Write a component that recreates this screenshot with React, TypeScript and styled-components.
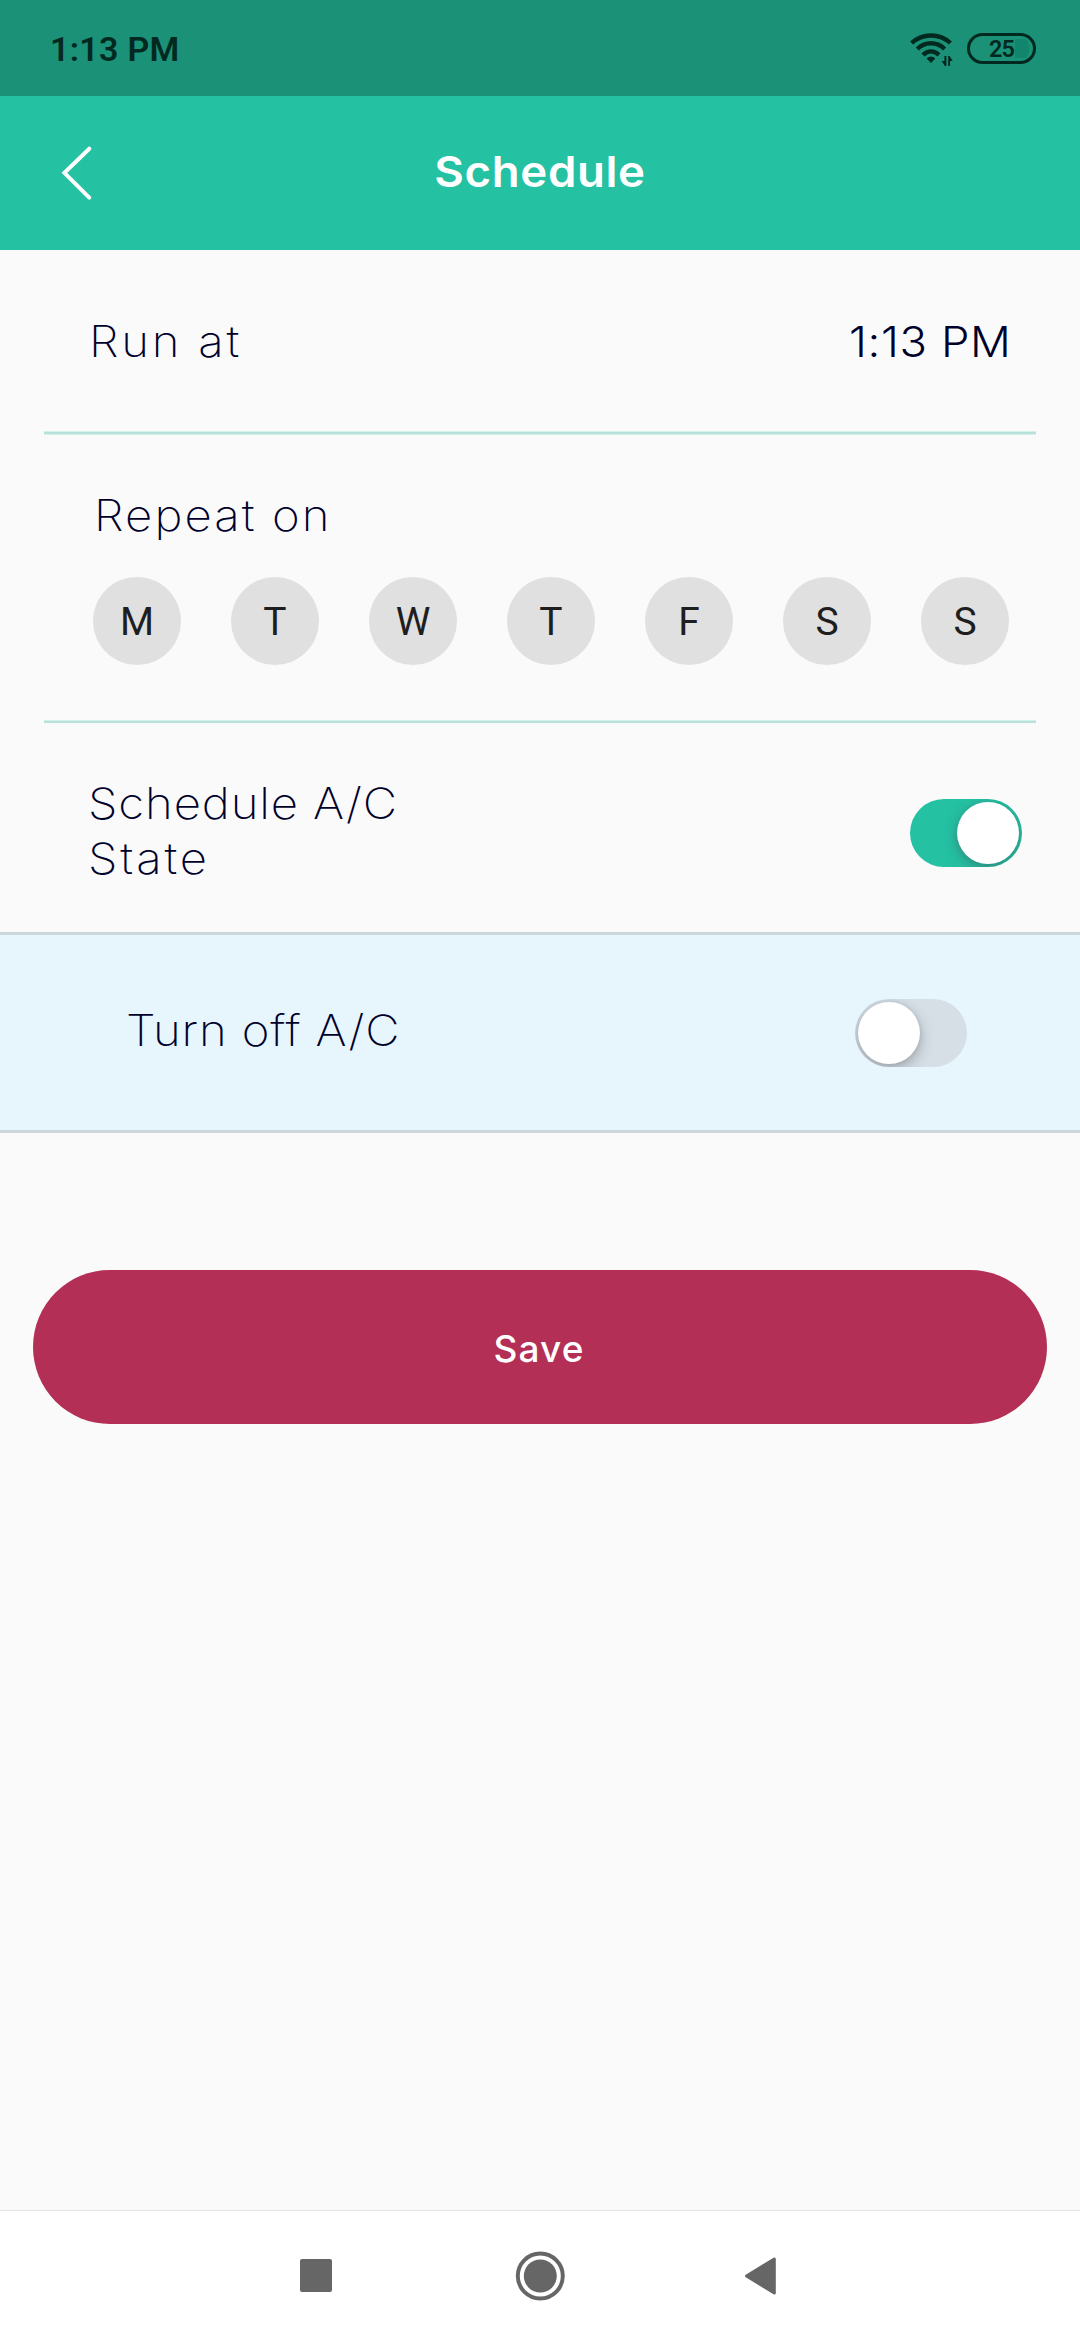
import React, { useState } from 'react';
import styled, { createGlobalStyle } from 'styled-components';

const GlobalStyle = createGlobalStyle`
  *, *::before, *::after { box-sizing: border-box; }
  body { margin: 0; background: #fafafb; font-family: Inter, "Liberation Sans", sans-serif; }
  button { border: 0; padding: 0; background: none; font: inherit; color: inherit; }
`;

const Screen = styled.div`
  display: flex;
  flex-direction: column;
  width: 1080px;
  height: 2340px;
  overflow: hidden;
  background: #fafafb;
  color: #00002a;
`;

const StatusBar = styled.div`
  display: flex;
  align-items: center;
  justify-content: space-between;
  flex: none;
  height: 96px;
  padding: 0 44px 0 50px;
  background: #1b9178;
  color: #01291f;
`;

const Clock = styled.span`
  padding-top: 2px;
  font: 600 34px/40px Roboto, sans-serif;
  letter-spacing: 0.3px;
`;

const StatusIcons = styled.div`
  display: flex;
  align-items: center;
  gap: 14px;
`;

const Battery = styled.div`
  display: flex;
  align-items: center;
  justify-content: center;
  width: 69px;
  height: 31px;
  border: 3px solid #01291f;
  border-radius: 16px;
  background: radial-gradient(circle at 0 50%, #12856d 14px, transparent 15px) 45px center / 15px 19px no-repeat;
  font: 600 23.5px/25px Roboto, sans-serif;
  letter-spacing: -0.9px;
  padding: 2px 2px 0 2px;
`;

const Header = styled.header`
  display: grid;
  grid-template-columns: 150px 1fr 150px;
  align-items: center;
  flex: none;
  height: 154px;
  background: #24c1a3;
  color: #fff;
`;

const BackButton = styled.button`
  display: flex;
  width: 40px;
  height: 60px;
  margin-left: 58px;
`;

const Title = styled.h1`
  margin: 0;
  padding-bottom: 4px;
  text-align: center;
  font-size: 43px;
  font-weight: 600;
  line-height: 52px;
  letter-spacing: 0.6px;
  transform: scaleX(1.06);
`;

const SettingRow = styled.section<{ $height: number; $right: number; $left: number; $top?: number }>`
  display: flex;
  align-items: center;
  justify-content: space-between;
  flex: none;
  height: ${p => p.$height}px;
  padding: ${p => p.$top ?? 0}px ${p => p.$right}px 0 ${p => p.$left}px;
`;

const ActionRow = styled(SettingRow)`
  background: #e7f5fc;
  border-top: 3px solid #ccd7dc;
  border-bottom: 3px solid #ccd7dc;
`;

const Label = styled.span<{ $spacing: number }>`
  display: block;
  font-size: 43px;
  font-weight: 200;
  line-height: 55px;
  letter-spacing: ${p => p.$spacing}px;
  white-space: nowrap;
  transform: scaleX(1.1);
  transform-origin: left;
`;

const LabelStack = styled.div`
  padding-bottom: 4px;
`;

const RunLabel = styled(Label)`
  padding-top: 2px;
`;

const ActionLabel = styled(Label)`
  padding-bottom: 4px;
`;

const TimeValue = styled.span`
  padding-top: 2px;
  font-size: 42px;
  font-weight: 300;
  line-height: 55px;
  letter-spacing: 0.6px;
  transform: scaleX(1.08);
  transform-origin: right;
`;

const Divider = styled.hr<{ $height: number }>`
  flex: none;
  width: 992px;
  height: ${p => p.$height}px;
  margin: 0 auto;
  border: solid #d3f2ec;
  border-width: 1px 0 ${p => p.$height - 3}px;
  background: #b9e0da;
`;

const RepeatSection = styled.section`
  flex: none;
  height: 285px;
  padding: 53px 71px 0 93px;
`;

const RepeatLabel = styled(Label)`
  margin-left: 1px;
`;

const Days = styled.div`
  display: flex;
  justify-content: space-between;
  margin-top: 34px;
`;

const Day = styled.button<{ $selected: boolean }>`
  display: flex;
  align-items: center;
  justify-content: center;
  width: 88px;
  height: 88px;
  padding-top: 1px;
  border-radius: 50%;
  background: ${p => (p.$selected ? '#24c1a3' : '#e0e0e0')};
  color: #1e1e1e;
  font: 400 39px/46px Roboto, sans-serif;
`;

const Track = styled.button<{ $on: boolean }>`
  display: flex;
  align-items: center;
  justify-content: ${p => (p.$on ? 'flex-end' : 'flex-start')};
  width: 112px;
  height: 68px;
  padding: 0 3px;
  border-radius: 34px;
  overflow: hidden;
  background: ${p => (p.$on ? '#24c1a3' : '#d5dfe5')};
`;

const Thumb = styled.span`
  width: 62px;
  height: 62px;
  border-radius: 50%;
  background: #fff;
  box-shadow: 0 5px 14px rgba(60, 60, 70, 0.36), 0 0 4px rgba(60, 60, 70, 0.12);
`;

const SaveButton = styled.button`
  display: flex;
  align-items: center;
  justify-content: center;
  flex: none;
  height: 154px;
  margin: 137px 33px 0;
  padding: 3px 2px 0 0;
  border-radius: 77px;
  background: #b32f56;
  color: #fff;
  font-size: 37px;
  font-weight: 500;
  line-height: 46px;
  letter-spacing: 1.1px;
`;

const NavBar = styled.nav`
  display: flex;
  align-items: center;
  flex: none;
  height: 130px;
  margin-top: auto;
  padding-left: 300px;
  border-top: 1px solid #e3e3e3;
  background: #fff;
  color: #666;
`;

const NavIcon = styled.svg<{ $gap: number }>`
  display: block;
  margin-left: ${p => p.$gap}px;
`;

function Switch({ initial }: { initial: boolean }) {
  const [on, setOn] = useState(initial);
  return (
    <Track $on={on} role="switch" aria-checked={on} onClick={() => setOn(!on)}>
      <Thumb />
    </Track>
  );
}

function WifiIcon() {
  return (
    <svg width="43" height="35" viewBox="0 0 43 35" fill="none" stroke="currentColor" strokeWidth="4.4">
      <path d="M1.6 12C12.5 1.9 29.5 1.9 40.4 12" />
      <path d="M7.3 18C15.4 10.4 26.6 10.4 34.7 18" />
      <path d="M13 24C18 19.2 24 19.2 29 24" />
      <path d="M16.6 27.6C19.3 24.9 22.7 24.9 25.4 27.6L21 32Z" fill="currentColor" stroke="none" />
      <path d="M34.4 25H36.4V35H34.9L31.6 30H34.4Z" fill="currentColor" stroke="none" />
      <path d="M38.2 35V25H39.6L42.7 30H40V35Z" fill="currentColor" stroke="none" />
    </svg>
  );
}

const WEEK = ['M', 'T', 'W', 'T', 'F', 'S', 'S'];

export default function App() {
  const [selected, setSelected] = useState<number[]>([]);
  const toggleDay = (i: number) =>
    setSelected(s => (s.includes(i) ? s.filter(d => d !== i) : [...s, i]));

  return (
    <>
      <GlobalStyle />
      <Screen>
        <StatusBar>
          <Clock>1:13 PM</Clock>
          <StatusIcons>
            <WifiIcon />
            <Battery>25</Battery>
          </StatusIcons>
        </StatusBar>

        <Header>
          <BackButton aria-label="Back">
            <svg width="40" height="60" viewBox="0 0 40 60" fill="none" stroke="currentColor" strokeWidth="4" strokeLinecap="round">
              <path d="M31.3 5.7L6.4 29.8L31.3 54.7" />
            </svg>
          </BackButton>
          <Title>Schedule</Title>
        </Header>

        <SettingRow $height={181} $left={89} $right={68}>
          <RunLabel $spacing={2.5}>Run at</RunLabel>
          <TimeValue>1:13 PM</TimeValue>
        </SettingRow>
        <Divider $height={4} />

        <RepeatSection>
          <RepeatLabel $spacing={1.9}>Repeat on</RepeatLabel>
          <Days>
            {WEEK.map((d, i) => (
              <Day key={i} $selected={selected.includes(i)} onClick={() => toggleDay(i)}>
                {d}
              </Day>
            ))}
          </Days>
        </RepeatSection>
        <Divider $height={3} />

        <SettingRow $height={209} $left={88} $right={58} $top={11}>
          <LabelStack>
            <Label $spacing={0.8}>Schedule A/C</Label>
            <Label $spacing={2.6}>State</Label>
          </LabelStack>
          <Switch initial />
        </SettingRow>

        <ActionRow $height={201} $left={126} $right={113}>
          <ActionLabel $spacing={0.8}>Turn off A/C</ActionLabel>
          <Switch initial={false} />
        </ActionRow>

        <SaveButton>Save</SaveButton>

        <NavBar>
          <NavIcon $gap={0} width="32" height="33" viewBox="0 0 32 33" fill="currentColor">
            <rect width="32" height="33" rx="2" />
          </NavIcon>
          <NavIcon $gap={183} width="50" height="50" viewBox="0 0 50 50" fill="currentColor">
            <circle cx="25.3" cy="25" r="22.5" fill="none" stroke="currentColor" strokeWidth="4" />
            <circle cx="25.3" cy="25" r="16.5" />
          </NavIcon>
          <NavIcon $gap={179} width="32" height="38" viewBox="0 0 32 38" fill="currentColor" stroke="currentColor" strokeWidth="3" strokeLinejoin="round">
            <path d="M2.5 19L30.3 2V36Z" />
          </NavIcon>
        </NavBar>
      </Screen>
    </>
  );
}
